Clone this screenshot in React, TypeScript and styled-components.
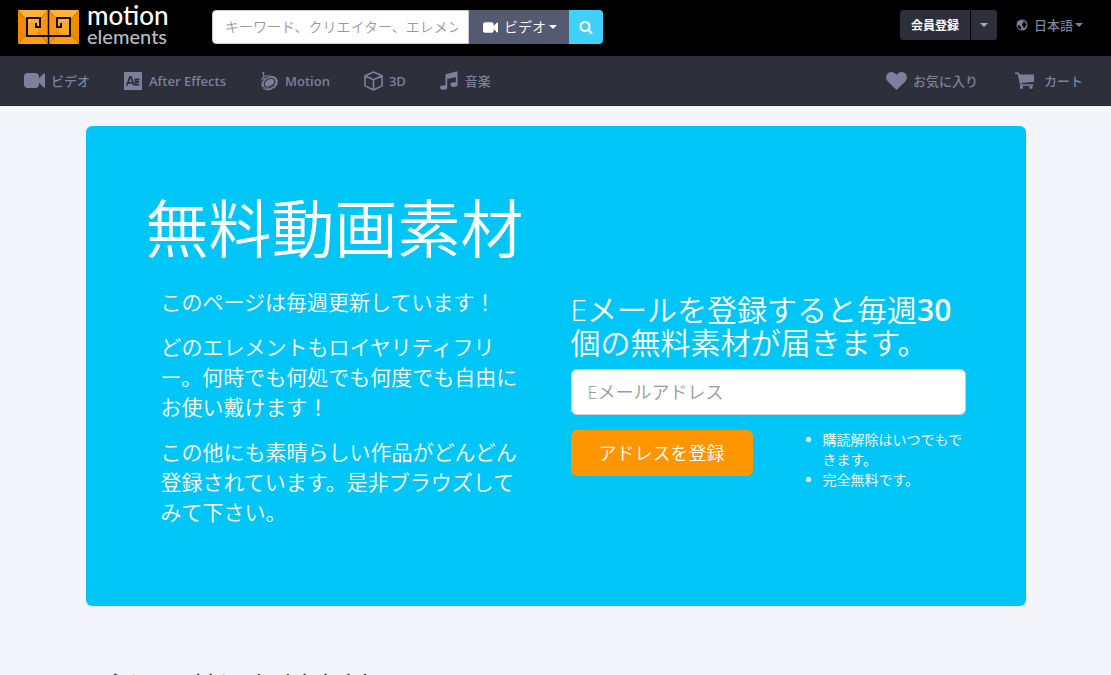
import React from "react";
import styled, { createGlobalStyle } from "styled-components";

const font = '"Open Sans", "Noto Sans CJK JP", sans-serif';

const GlobalStyle = createGlobalStyle`
  *, *::before, *::after { box-sizing: border-box; }
  body {
    margin: 0;
    background: #f3f5fa;
    color: #333;
    font-family: ${font};
    font-size: 14px;
    line-height: 20px;
  }
  button, input, select { font-family: inherit; margin: 0; }
  h1, h2, p, ul { margin: 0; }
`;

const TopBar = styled.header`
  display: flex;
  align-items: flex-start;
  height: 56px;
  padding: 0 28px 0 18px;
  background: #000;
`;

const Logo = styled.a`
  display: flex;
  gap: 8px;
  width: 194px;
  padding-top: 4px;
  color: #fff;
  text-decoration: none;
  font-family: Lato, sans-serif;
  font-weight: 500;
`;

const LogoMark = styled.svg`
  display: block;
  margin-top: 6px;
`;

const LogoText = styled.span`
  display: flex;
  flex-direction: column;
`;

const LogoLine = styled.span<{ $minor?: boolean }>`
  font-size: ${(p) => (p.$minor ? 20 : 26)}px;
  line-height: ${(p) => (p.$minor ? 18 : 23)}px;
  color: ${(p) => (p.$minor ? "#b9bcc2" : "#fff")};
`;

const Search = styled.form`
  display: flex;
  height: 34px;
  margin-top: 10px;
  border-radius: 4px;
  overflow: hidden;
`;

const SearchInput = styled.input`
  width: 257px;
  padding: 0 10px 2px 12px;
  border: 1px solid #ccc;
  border-radius: 4px 0 0 4px;
  background: #fff;
  font-size: 14px;
  font-weight: 350;
  &::placeholder { color: #999; opacity: 1; }
`;

const SearchType = styled.label`
  display: flex;
  align-items: center;
  width: 100px;
  padding-left: 14px;
  background: #545b70;
  color: #fff;
`;

const BareSelect = styled.select<{ $strong?: boolean }>`
  appearance: none;
  border: 0;
  padding: 0;
  background: transparent;
  color: inherit;
  font-size: ${(p) => (p.$strong ? 13 : 14)}px;
  font-weight: ${(p) => (p.$strong ? 500 : 350)};
  line-height: 20px;
`;

const Caret = styled.span<{ $gap?: number }>`
  margin-left: ${(p) => p.$gap ?? 0}px;
  border: 4px solid transparent;
  border-top-color: currentColor;
  border-bottom: 0;
`;

const SearchButton = styled.button`
  display: grid;
  place-items: center;
  width: 34px;
  border: 0;
  padding: 0;
  background: #41d0f7;
  color: #fff;
`;

const Account = styled.div`
  display: flex;
  gap: 1px;
  margin: 10px 19px 0 auto;
`;

const AccountButton = styled.button<{ $menu?: boolean }>`
  display: grid;
  place-items: center;
  height: 30px;
  width: ${(p) => (p.$menu ? 26 : 70)}px;
  padding: 0;
  border: 0;
  border-radius: ${(p) => (p.$menu ? "0 3px 3px 0" : "3px 0 0 3px")};
  background: #2d2f3b;
  color: ${(p) => (p.$menu ? "#a3a8bb" : "#fff")};
  font-size: 12px;
  font-weight: 700;
`;

const Language = styled.label`
  display: flex;
  align-items: center;
  height: 30px;
  margin-top: 10px;
  color: #7b819b;
`;

const NavBar = styled.nav`
  display: flex;
  justify-content: space-between;
  height: 50px;
  padding: 0 28px 0 24px;
  background: #2d2f3b;
  border-bottom: 1px solid #262833;
`;

const NavGroup = styled.div<{ $gap: number }>`
  display: flex;
  gap: ${(p) => p.$gap}px;
`;

const NavLink = styled.a`
  display: flex;
  align-items: center;
  gap: 6px;
  color: #7b819b;
  font-size: 13px;
  font-weight: 600;
  text-decoration: none;
  white-space: nowrap;
`;

const NavCjk = styled.span`
  font-weight: 500;
`;

const Container = styled.main`
  max-width: 940px;
  margin: 20px auto 0;
`;

const Hero = styled.section`
  min-height: 480px;
  padding: 67px 60px 60px;
  border-radius: 6px;
  background: #00c6f7;
  color: #fff;
  font-weight: 350;
`;

const HeroTitle = styled.h1`
  margin-bottom: 24px;
  font-size: 63px;
  font-weight: 350;
  line-height: 70px;
`;

const Columns = styled.div`
  display: grid;
  grid-template-columns: 1fr 1fr;
  gap: 30px;
`;

const Intro = styled.div`
  display: flex;
  flex-direction: column;
  gap: 15px;
  padding: 0 15px;
  font-size: 21px;
  line-height: 30px;
`;

const SignUp = styled.form`
  padding-top: 6px;
`;

const SignUpTitle = styled.label`
  display: block;
  margin-bottom: 10px;
  font-size: 30px;
  line-height: 33px;
  strong { font-weight: 600; }
`;

const EmailInput = styled.input`
  display: block;
  width: 100%;
  height: 46px;
  padding: 0 16px;
  border: 1px solid #ccd3e0;
  border-radius: 6px;
  background: #fff;
  font-size: 18px;
  font-weight: 350;
  &::placeholder { color: #999; opacity: 1; }
`;

const SignUpRow = styled.div`
  display: flex;
  justify-content: space-between;
  align-items: flex-start;
  margin-top: 15px;
`;

const SubmitButton = styled.button`
  height: 46px;
  padding: 0 28px 2px;
  border: 0;
  border-radius: 6px;
  background: #ff9600;
  color: #fff;
  font-size: 18px;
  font-weight: 350;
`;

const Notes = styled.ul`
  width: 183px;
  padding-left: 40px;
  font-size: 14px;
  line-height: 20px;
`;

const SectionTitle = styled.h2`
  margin-top: 65px;
  padding: 0 15px;
  font-size: 30px;
  font-weight: 350;
  line-height: 33px;
`;

const Icon = styled.svg<{ $mr?: number }>`
  display: block;
  flex: none;
  fill: currentColor;
  margin-right: ${(p) => p.$mr ?? 0}px;
`;

const VideoIcon = ({ size, mr }: { size: number; mr?: number }) => (
  <Icon $mr={mr} width={size} height={size} viewBox="0 0 1792 1792" aria-hidden>
    <path d="M1792 352v1088q0 42-39 59-13 5-25 5-27 0-45-19l-403-403v166q0 119-84.5 203.5t-203.5 84.5h-704q-119 0-203.5-84.5t-84.5-203.5v-704q0-119 84.5-203.5t203.5-84.5h704q119 0 203.5 84.5t84.5 203.5v165l403-402q18-19 45-19 12 0 25 5 39 17 39 59z" />
  </Icon>
);

const SearchIcon = () => (
  <Icon width="14" height="14" viewBox="0 0 1792 1792" aria-hidden>
    <path d="M1216 832q0-185-131.5-316.5t-316.5-131.5-316.5 131.5-131.5 316.5 131.5 316.5 316.5 131.5 316.5-131.5 131.5-316.5zm512 832q0 52-38 90t-90 38q-54 0-90-38l-343-342q-179 124-399 124-143 0-273.5-55.5t-225-150-150-225-55.5-273.5 55.5-273.5 150-225 225-150 273.5-55.5 273.5 55.5 225 150 150 225 55.5 273.5q0 220-124 399l343 343q37 37 37 90z" />
  </Icon>
);

const GlobeIcon = () => (
  <Icon $mr={6} width="12" height="12" viewBox="0 0 24 24" aria-hidden>
    <path
      fillRule="evenodd"
      d="M12 1a11 11 0 1 0 0 22 11 11 0 0 0 0-22zM14.500 4l2.500 1 3 3.500 1 3-2 3-2 3.500-2 0-.500-4-2.500-1 0-3 2-2 2-1-2-2zM4 12l3 1 2 2 2 1-.500 2-1.500 3-3-1.500-2.500-4.500z"
    />
  </Icon>
);

const AeIcon = () => (
  <Icon $mr={1} width="18" height="18" viewBox="0 0 18 18" aria-hidden>
    <rect width="18" height="18" />
    <g fill="none" stroke="#2d2f3b" strokeWidth="1.800">
      <path d="M2.800 13.500 6 5h1l3 8.500M4 10.800h5" />
      <path d="M15.500 7.500h-4v5.200h4M11.500 10h3.500" />
    </g>
  </Icon>
);

const MotionIcon = () => (
  <Icon width="19" height="20" viewBox="0 0 20 20" aria-hidden>
    <ellipse cx="10" cy="12" rx="9" ry="6.300" transform="rotate(-28 10 12)" />
    <path d="M1.500 14c.500 2.500 2 4.500 4.500 5.500 4 .800 7-.500 9.500-3.500z" />
    <ellipse
      cx="10"
      cy="11.800"
      rx="6"
      ry="4"
      transform="rotate(-28 10 11.800)"
      fill="none"
      stroke="#2d2f3b"
      strokeWidth="1.200"
    />
    <path fill="none" stroke="#2d2f3b" strokeWidth=".900" d="M1.500 15.500c4 3.200 9.500 2.500 14-1.500" />
    <path
      fill="none"
      stroke="currentColor"
      strokeWidth="1.200"
      d="M3.500 1.500 4.500 9M4 5.200c5-1.700 11-.700 14.500 5.300M4 5.500 1.300 9.500M14.500 17.500l4-5"
    />
    <circle cx="3.500" cy="1.500" r="1.100" />
  </Icon>
);

const CubeIcon = () => (
  <Icon width="19" height="20" viewBox="0 0 19 20" aria-hidden>
    <path
      fill="none"
      stroke="currentColor"
      strokeWidth="1.600"
      strokeLinejoin="round"
      d="M9.500 1 18 4.700v10.200L9.500 19 1 14.900V4.700zM1 4.700l8.500 4 8.500-4M9.500 8.700V19"
    />
  </Icon>
);

const MusicIcon = () => (
  <Icon $mr={1} width="18" height="19" viewBox="0 0 18 19" aria-hidden>
    <path d="M5.500 3.200 17.500.300v13h-1.700V6L7.200 8v8H5.500z" />
    <ellipse cx="3.700" cy="16.500" rx="3.600" ry="2.300" />
    <ellipse cx="14" cy="13.600" rx="3.600" ry="2.300" />
  </Icon>
);

const HeartIcon = () => (
  <Icon width="21" height="18" viewBox="0 0 21 18" aria-hidden>
    <path d="M10.500 18 2.200 10C-.800 7-.300 3 2 1.200 4.800-.900 8.500 0 10.500 3 12.500 0 16.200-.900 19 1.200c2.300 1.800 2.800 5.800-.200 8.800z" />
  </Icon>
);

const CartIcon = () => (
  <Icon $mr={4} width="19" height="17" viewBox="0 0 19 17" aria-hidden>
    <path d="M0 .500h3.800l.700 2H19v7.200L6.200 11l.300 1.200H18v1.500H5.200L2.700 2H0z" />
    <path d="M5 14h3v2.800H5zM14.500 14h3v2.800h-3z" />
  </Icon>
);

const LogoHalf = () => (
  <>
    <path fill="#ffb338" d="M0 0h30L20 12H10z" />
    <path fill="#f08a00" d="M0 0l10 12v10L0 34z" />
    <path fill="#ff9d0a" d="M0 34l10-12h10l10 12z" />
    <path fill="#fb9410" d="M30 0v34L20 22V12z" />
    <path fill="#ffb040" d="M9 8h12v9H9z" />
    <path fill="#ffa62a" d="M9 25V12h11v10z" />
    <path fill="none" stroke="#120900" strokeWidth="2" d="M30 26H9V8h13v9h-4v-4" />
  </>
);

const BrandMark = () => (
  <LogoMark width="61" height="34" viewBox="0 0 61 34" aria-hidden>
    <LogoHalf />
    <g transform="translate(61 0) scale(-1 1)">
      <LogoHalf />
    </g>
    <path stroke="#120900" strokeWidth="1.500" d="M30.500 0v34" />
  </LogoMark>
);

export default function App() {
  return (
    <>
      <GlobalStyle />
      <TopBar>
        <Logo href="#">
          <BrandMark />
          <LogoText>
            <LogoLine>motion</LogoLine>
            <LogoLine $minor>elements</LogoLine>
          </LogoText>
        </Logo>
        <Search>
          <SearchInput
            type="text"
            aria-label="検索"
            placeholder="キーワード、クリエイター、エレメント"
          />
          <SearchType>
            <VideoIcon size={15} mr={6} />
            <BareSelect aria-label="カテゴリー">
              <option>ビデオ</option>
            </BareSelect>
            <Caret $gap={3} />
          </SearchType>
          <SearchButton type="submit" aria-label="検索">
            <SearchIcon />
          </SearchButton>
        </Search>
        <Account>
          <AccountButton type="button">会員登録</AccountButton>
          <AccountButton type="button" $menu aria-label="メニュー">
            <Caret />
          </AccountButton>
        </Account>
        <Language>
          <GlobeIcon />
          <BareSelect $strong aria-label="言語">
            <option>日本語</option>
          </BareSelect>
          <Caret $gap={1} />
        </Language>
      </TopBar>
      <NavBar>
        <NavGroup $gap={34}>
          <NavLink href="#">
            <VideoIcon size={21} />
            <NavCjk>ビデオ</NavCjk>
          </NavLink>
          <NavLink href="#">
            <AeIcon />
            After Effects
          </NavLink>
          <NavLink href="#">
            <MotionIcon />
            Motion
          </NavLink>
          <NavLink href="#">
            <CubeIcon />
            3D
          </NavLink>
          <NavLink href="#">
            <MusicIcon />
            <NavCjk>音楽</NavCjk>
          </NavLink>
        </NavGroup>
        <NavGroup $gap={37}>
          <NavLink href="#">
            <HeartIcon />
            <NavCjk>お気に入り</NavCjk>
          </NavLink>
          <NavLink href="#">
            <CartIcon />
            <NavCjk>カート</NavCjk>
          </NavLink>
        </NavGroup>
      </NavBar>
      <Container>
        <Hero>
          <HeroTitle>無料動画素材</HeroTitle>
          <Columns>
            <Intro>
              <p>このページは毎週更新しています！</p>
              <p>どのエレメントもロイヤリティフリー。何時でも何処でも何度でも自由にお使い戴けます！</p>
              <p>この他にも素晴らしい作品がどんどん登録されています。是非ブラウズしてみて下さい。</p>
            </Intro>
            <SignUp>
              <SignUpTitle htmlFor="email">
                Eメールを登録すると毎週<strong>30</strong>個の無料素材が届きます。
              </SignUpTitle>
              <EmailInput id="email" type="email" placeholder="Eメールアドレス" />
              <SignUpRow>
                <SubmitButton type="submit">アドレスを登録</SubmitButton>
                <Notes>
                  <li>購読解除はいつでもできます。</li>
                  <li>完全無料です。</li>
                </Notes>
              </SignUpRow>
            </SignUp>
          </Columns>
        </Hero>
        <SectionTitle>今週の特選無料素材</SectionTitle>
      </Container>
    </>
  );
}
